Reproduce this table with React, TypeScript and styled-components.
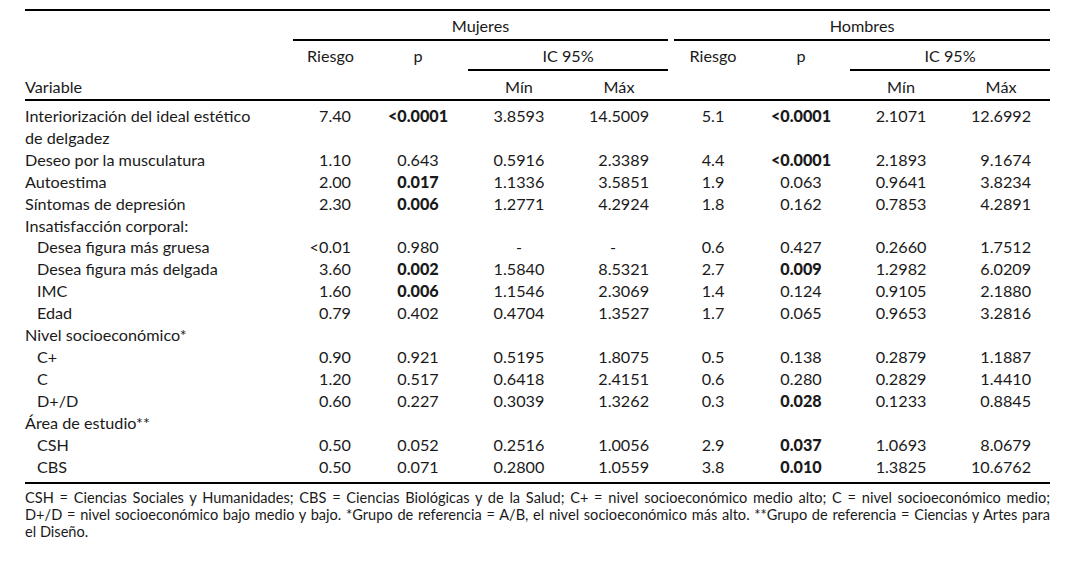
import React from 'react';
import styled, { createGlobalStyle } from 'styled-components';

type Align = 'left' | 'center' | 'right';

interface Column {
  width: number;
  align: Align;
  padRight: number;
}

interface DataRow {
  label: React.ReactNode;
  indent?: boolean;
  values?: string[];
  bold?: boolean[];
}

const GlobalStyle = createGlobalStyle`
  html, body {
    margin: 0;
    padding: 0;
    background: #ffffff;
  }

  body {
    font-family: Lato, 'Liberation Sans', sans-serif;
    color: #1a1a1a;
  }
`;

// Variable column, then Mujeres (4) and Hombres (4)
const columns: Column[] = [
  { width: 75, align: 'right', padRight: 17 },
  { width: 100, align: 'center', padRight: 0 },
  { width: 102, align: 'center', padRight: 0 },
  { width: 104, align: 'right', padRight: 25 },
  { width: 78, align: 'center', padRight: 0 },
  { width: 98, align: 'center', padRight: 0 },
  { width: 102, align: 'center', padRight: 0 },
  { width: 98, align: 'right', padRight: 19 },
];

const rows: DataRow[] = [
  {
    label: (
      <>
        Interiorización del ideal estético
        <br />
        de delgadez
      </>
    ),
    values: ['7.40', '<0.0001', '3.8593', '14.5009', '5.1', '<0.0001', '2.1071', '12.6992'],
    bold: [false, true, false, false, false, true],
  },
  {
    label: 'Deseo por la musculatura',
    values: ['1.10', '0.643', '0.5916', '2.3389', '4.4', '<0.0001', '2.1893', '9.1674'],
    bold: [false, false, false, false, false, true],
  },
  {
    label: 'Autoestima',
    values: ['2.00', '0.017', '1.1336', '3.5851', '1.9', '0.063', '0.9641', '3.8234'],
    bold: [false, true],
  },
  {
    label: 'Síntomas de depresión',
    values: ['2.30', '0.006', '1.2771', '4.2924', '1.8', '0.162', '0.7853', '4.2891'],
    bold: [false, true],
  },
  { label: 'Insatisfacción corporal:' },
  {
    label: 'Desea figura más gruesa',
    indent: true,
    values: ['<0.01', '0.980', '-', '-', '0.6', '0.427', '0.2660', '1.7512'],
  },
  {
    label: 'Desea figura más delgada',
    indent: true,
    values: ['3.60', '0.002', '1.5840', '8.5321', '2.7', '0.009', '1.2982', '6.0209'],
    bold: [false, true, false, false, false, true],
  },
  {
    label: 'IMC',
    indent: true,
    values: ['1.60', '0.006', '1.1546', '2.3069', '1.4', '0.124', '0.9105', '2.1880'],
    bold: [false, true],
  },
  {
    label: 'Edad',
    indent: true,
    values: ['0.79', '0.402', '0.4704', '1.3527', '1.7', '0.065', '0.9653', '3.2816'],
  },
  { label: 'Nivel socioeconómico*' },
  {
    label: 'C+',
    indent: true,
    values: ['0.90', '0.921', '0.5195', '1.8075', '0.5', '0.138', '0.2879', '1.1887'],
  },
  {
    label: 'C',
    indent: true,
    values: ['1.20', '0.517', '0.6418', '2.4151', '0.6', '0.280', '0.2829', '1.4410'],
  },
  {
    label: 'D+/D',
    indent: true,
    values: ['0.60', '0.227', '0.3039', '1.3262', '0.3', '0.028', '0.1233', '0.8845'],
    bold: [false, false, false, false, false, true],
  },
  { label: 'Área de estudio**' },
  {
    label: 'CSH',
    indent: true,
    values: ['0.50', '0.052', '0.2516', '1.0056', '2.9', '0.037', '1.0693', '8.0679'],
    bold: [false, false, false, false, false, true],
  },
  {
    label: 'CBS',
    indent: true,
    values: ['0.50', '0.071', '0.2800', '1.0559', '3.8', '0.010', '1.3825', '10.6762'],
    bold: [false, false, false, false, false, true],
  },
];

const Page = styled.div`
  width: 1075px;
  height: 567px;
  box-sizing: border-box;
  padding: 9px 25px 0;
  overflow: hidden;
`;

const Table = styled.table`
  width: 1025px;
  table-layout: fixed;
  border-collapse: collapse;
  border-top: 2px solid #000000;
  border-bottom: 2px solid #000000;
  font-size: 16.2px;
`;

const HeadCell = styled.th<{ $align?: Align; $padRight?: number; $rule?: boolean }>`
  padding: 0 ${(p) => p.$padRight ?? 0}px 0 0;
  font-weight: 400;
  text-align: ${(p) => p.$align ?? 'center'};
  vertical-align: top;
  border-bottom: ${(p) => (p.$rule ? '2px solid #000000' : 'none')};
`;

const HeadLabel = styled.div<{ $underline?: boolean; $short?: boolean }>`
  box-sizing: border-box;
  height: ${(p) => (p.$short ? 28 : 30)}px;
  padding-top: ${(p) => (p.$short ? 4 : 3)}px;
  line-height: 24px;
  border-bottom: ${(p) => (p.$short ? 0 : 2)}px solid
    ${(p) => (p.$underline ? '#000000' : 'transparent')};
`;

const Body = styled.tbody`
  tr:first-child td {
    padding-top: 4px;
  }

  tr:last-child td {
    padding-bottom: 5px;
  }
`;

const LabelCell = styled.td<{ $indent?: boolean }>`
  padding: 0 0 0 ${(p) => (p.$indent ? 12 : 0)}px;
  line-height: 21.9px;
  vertical-align: top;
`;

const NumCell = styled.td<{ $align: Align; $padRight: number; $bold?: boolean }>`
  padding: 0 ${(p) => p.$padRight}px 0 0;
  line-height: 21.9px;
  text-align: ${(p) => p.$align};
  vertical-align: top;
  font-weight: ${(p) => (p.$bold ? 900 : 400)};
  white-space: nowrap;
`;

const Notes = styled.div`
  margin-top: 5px;
  font-size: 14.6px;
  line-height: 17px;
`;

const NoteLine = styled.div<{ $justify?: boolean }>`
  text-align: ${(p) => (p.$justify ? 'justify' : 'left')};
  text-align-last: ${(p) => (p.$justify ? 'justify' : 'left')};
  white-space: nowrap;
`;

const App: React.FC = () => {
  return (
    <Page>
      <GlobalStyle />
      <Table>
        <colgroup>
          <col style={{ width: 268 }} />
          {columns.map((c, i) => (
            <col key={i} style={{ width: c.width }} />
          ))}
        </colgroup>
        <thead>
          <tr>
            <HeadCell />
            <HeadCell colSpan={4} $padRight={6}>
              <HeadLabel $underline>Mujeres</HeadLabel>
            </HeadCell>
            <HeadCell colSpan={4}>
              <HeadLabel $underline>Hombres</HeadLabel>
            </HeadCell>
          </tr>
          <tr>
            <HeadCell />
            <HeadCell>
              <HeadLabel>Riesgo</HeadLabel>
            </HeadCell>
            <HeadCell>
              <HeadLabel>p</HeadLabel>
            </HeadCell>
            <HeadCell colSpan={2} $padRight={6}>
              <HeadLabel $underline>IC 95%</HeadLabel>
            </HeadCell>
            <HeadCell>
              <HeadLabel>Riesgo</HeadLabel>
            </HeadCell>
            <HeadCell>
              <HeadLabel>p</HeadLabel>
            </HeadCell>
            <HeadCell colSpan={2}>
              <HeadLabel $underline>IC 95%</HeadLabel>
            </HeadCell>
          </tr>
          <tr>
            <HeadCell $align="left" $rule>
              <HeadLabel $short>Variable</HeadLabel>
            </HeadCell>
            <HeadCell $rule />
            <HeadCell $rule />
            <HeadCell $rule>
              <HeadLabel $short>Mín</HeadLabel>
            </HeadCell>
            <HeadCell $rule $padRight={6}>
              <HeadLabel $short>Máx</HeadLabel>
            </HeadCell>
            <HeadCell $rule />
            <HeadCell $rule />
            <HeadCell $rule>
              <HeadLabel $short>Mín</HeadLabel>
            </HeadCell>
            <HeadCell $rule>
              <HeadLabel $short>Máx</HeadLabel>
            </HeadCell>
          </tr>
        </thead>
        <Body>
          {rows.map((row, r) => (
            <tr key={r}>
              <LabelCell $indent={row.indent} colSpan={row.values ? 1 : 9}>
                {row.label}
              </LabelCell>
              {row.values?.map((v, i) => {
                const col = columns[i];
                const dash = v === '-';
                return (
                  <NumCell
                    key={i}
                    $align={dash ? 'center' : col.align}
                    $padRight={dash ? (i === 3 ? 18 : 0) : col.padRight}
                    $bold={row.bold?.[i]}
                  >
                    {v}
                  </NumCell>
                );
              })}
            </tr>
          ))}
        </Body>
      </Table>
      <Notes>
        <NoteLine $justify>
          CSH = Ciencias Sociales y Humanidades; CBS = Ciencias Biológicas y de la Salud; C+ =
          nivel socioeconómico medio alto; C = nivel socioeconómico medio;
        </NoteLine>
        <NoteLine $justify>
          D+/D = nivel socioeconómico bajo medio y bajo. *Grupo de referencia = A/B, el nivel
          socioeconómico más alto. **Grupo de referencia = Ciencias y Artes para
        </NoteLine>
        <NoteLine>el Diseño.</NoteLine>
      </Notes>
    </Page>
  );
};

export default App;
